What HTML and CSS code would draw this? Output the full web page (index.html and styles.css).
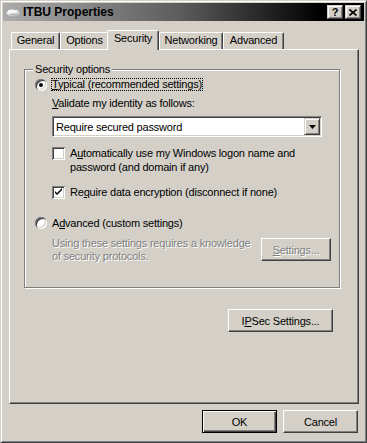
FILE: index.html
```html
<!DOCTYPE html>
<html>
<head>
<meta charset="utf-8">
<link rel="stylesheet" href="styles.css">
</head>
<body>
<div class="window">
  <div class="titlebar">
    <svg class="ticon" width="16" height="16" viewBox="0 0 16 16">
      <ellipse cx="8" cy="9" rx="6.5" ry="3.2" fill="#d8d8d8"/>
      <ellipse cx="7" cy="8" rx="4.5" ry="2.4" fill="#f4f4f4"/>
      <path d="M2 10 L5 7 L9 9 L13 6" stroke="#ffffff" stroke-width="1" fill="none"/>
      <ellipse cx="9" cy="10.5" rx="4" ry="1.2" fill="#b8b8b8"/>
    </svg>
    <span class="title">ITBU Properties</span>
    <div class="tbtns">
      <span class="tbtn help">?</span>
      <span class="tbtn close"><svg width="8" height="7" viewBox="0 0 8 7"><path d="M0.5 0.5 L7.5 6.5 M7.5 0.5 L0.5 6.5" stroke="#000" stroke-width="1.6"/></svg></span>
    </div>
  </div>
  <div class="body">
    <div class="tabs">
      <div class="tab t-general">General</div>
      <div class="tab t-options">Options</div>
      <div class="tab t-security sel">Security</div>
      <div class="tab t-networking">Networking</div>
      <div class="tab t-advanced">Advanced</div>
    </div>
    <div class="panel">
      <fieldset class="group">
        <legend>Security options</legend>
        <div class="opt-row r-typical">
          <span class="radio checked"></span>
          <span class="opt-label focus"><u>T</u>ypical (recommended settings)</span>
        </div>
        <div class="validate"><u>V</u>alidate my identity as follows:</div>
        <div class="combo">
          <span class="combo-text">Require secured password</span>
          <span class="combo-btn"><svg width="7" height="4" viewBox="0 0 7 4"><path d="M0 0 H7 L3.5 4 Z" fill="#000"/></svg></span>
        </div>
        <div class="check-row c1">
          <span class="check"></span>
          <span class="check-label">A<u>u</u>tomatically use my Windows logon name and<br>password (and domain if any)</span>
        </div>
        <div class="check-row c2">
          <span class="check"><svg width="9" height="9" viewBox="0 0 9 9"><path d="M1 3 L1 5 L3 7 L8 2 L8 0 L3 5 Z" fill="#000"/></svg></span>
          <span class="check-label">Re<u>q</u>uire data encryption (disconnect if none)</span>
        </div>
        <div class="opt-row r-adv">
          <span class="radio"></span>
          <span class="opt-label">A<u>d</u>vanced (custom settings)</span>
        </div>
        <div class="adv-info">
          <span class="disabled-text">Using these settings requires a knowledge<br>of security protocols.</span>
          <button class="btn settings disabled"><u>S</u>ettings...</button>
        </div>
      </fieldset>
      <div class="ipsec-row"><button class="btn ipsec">I<u>P</u>Sec Settings...</button></div>
    </div>
    <div class="footer">
      <button class="btn default">OK</button>
      <button class="btn">Cancel</button>
    </div>
  </div>
</div>
</body>
</html>
```
FILE: styles.css
```css
* { box-sizing: border-box; }
html, body { margin: 0; padding: 0; }
body {
  background: #d4d0c8;
  font-family: "Liberation Sans", Arial, sans-serif;
  font-size: 11px;
  letter-spacing: -0.2px;
  color: #000;
}
u { text-decoration: underline; text-underline-offset: 1px; }

.window {
  width: 367px;
  height: 443px;
  border: 1px solid;
  border-color: #d4d0c8 #404040 #404040 #d4d0c8;
  box-shadow: inset 1px 1px #fff, inset -1px -1px #808080;
  padding: 2px;
  background: #d4d0c8;
}

.titlebar {
  height: 18px;
  display: flex;
  align-items: center;
  background: linear-gradient(to right, #acacac 0%, #5a5a5a 50%, #000 88%);
  padding: 0 3px 0 2px;
}
.ticon { flex: none; }
.title { font-weight: bold; font-size: 12px; letter-spacing: 0; margin-left: 2px; flex: 1; }
.tbtns { display: flex; gap: 2px; }
.tbtn {
  width: 16px;
  height: 14px;
  background: #d4d0c8;
  border: 1px solid;
  border-color: #d4d0c8 #404040 #404040 #d4d0c8;
  box-shadow: inset 1px 1px #fff, inset -1px -1px #808080;
  display: flex;
  align-items: center;
  justify-content: center;
  font-weight: bold;
  font-size: 11px;
  letter-spacing: 0;
  line-height: 12px;
}

.body { padding: 9px 3px 0 6px; }

.tabs {
  display: flex;
  align-items: flex-end;
  height: 19px;
  padding-left: 2px;
}
.tab {
  height: 17px;
  border-top: 1px solid #fff;
  border-left: 1px solid #fff;
  border-right: 1px solid #404040;
  box-shadow: inset -1px 0 #808080;
  border-radius: 2px 2px 0 0;
  text-align: center;
  line-height: 14px;
  padding-bottom: 2px;
  background: #d4d0c8;
}
.t-general { width: 49px; }
.t-options { width: 49px; }
.t-security { width: 52px; }
.t-networking { width: 64px; }
.t-advanced { width: 61px; }
.tab.sel {
  height: 20px;
  margin-left: -2px;
  margin-bottom: -1px;
  padding-bottom: 5px;
  position: relative;
  z-index: 1;
}

.panel {
  width: 350px;
  height: 355px;
  border: 1px solid;
  border-color: #fff #404040 #404040 #fff;
  box-shadow: inset -1px -1px #808080;
  padding: 0 0 0 14px;
}

.group {
  margin: 13px 0 0 0;
  padding: 0 0 24px 0;
  width: 316px;
  min-width: 0;
  border: 1px solid #808080;
  box-shadow: 1px 1px 0 #fff, inset 1px 1px 0 #fff;
}
.group legend {
  margin-left: 8px;
  padding: 0 2px;
  line-height: 13px;
  background: #d4d0c8;
}

.opt-row {
  display: flex;
  align-items: center;
  height: 13px;
  margin-left: 10px;
}
.r-typical { margin-top: 2px; }
.r-adv { margin-top: 17px; height: 14px; }
.opt-label { margin-left: 4px; padding: 0 1px; line-height: 13px; }
.focus { outline: 1px dotted #000; outline-offset: -1px; }

.radio {
  flex: none;
  width: 12px;
  height: 12px;
  border-radius: 50%;
  background: #fff;
  box-shadow: inset 1px 1px #808080, inset -1px -1px #fff, inset 2px 2px #404040, inset -2px -2px #d4d0c8;
  display: flex;
  align-items: center;
  justify-content: center;
}
.radio.checked::after {
  content: "";
  width: 4px;
  height: 4px;
  border-radius: 50%;
  background: #000;
}

.validate { margin: 6px 0 0 27px; line-height: 13px; }

.combo {
  margin: 6px 0 0 27px;
  width: 270px;
  height: 21px;
  border: 1px solid;
  border-color: #808080 #fff #fff #808080;
  box-shadow: inset 1px 1px #404040, inset -1px -1px #d4d0c8;
  background: #fff;
  display: flex;
  align-items: center;
  padding: 1px 1px 1px 2px;
}
.combo-text { flex: 1; padding-left: 1px; }
.combo-btn {
  width: 16px;
  height: 17px;
  background: #d4d0c8;
  border: 1px solid;
  border-color: #d4d0c8 #404040 #404040 #d4d0c8;
  box-shadow: inset 1px 1px #fff, inset -1px -1px #808080;
  display: flex;
  align-items: center;
  justify-content: center;
}

.check-row {
  display: flex;
  align-items: flex-start;
  margin-left: 27px;
  line-height: 14px;
}
.c1 { margin-top: 9px; }
.c2 { margin-top: 11px; }
.check {
  flex: none;
  width: 13px;
  height: 13px;
  margin-top: 1px;
  background: #fff;
  box-shadow: inset 1px 1px #808080, inset -1px -1px #fff, inset 2px 2px #404040, inset -2px -2px #d4d0c8;
  display: flex;
  align-items: center;
  justify-content: center;
}
.check-label { margin-left: 5px; }

.adv-info {
  display: flex;
  align-items: flex-start;
  margin: 7px 8px 0 27px;
}
.disabled-text {
  flex: 1;
  line-height: 13px;
  color: #808080;
  text-shadow: 1px 1px 0 #fff;
}

.btn {
  font: inherit;
  letter-spacing: inherit;
  color: #000;
  background: #d4d0c8;
  border: 1px solid;
  border-color: #fff #404040 #404040 #fff;
  box-shadow: inset -1px -1px #808080;
  height: 23px;
  padding: 0;
  text-align: center;
}
.btn.disabled { color: #808080; text-shadow: 1px 1px 0 #fff; }
.settings { width: 70px; margin-top: 1px; flex: none; }

.ipsec-row {
  display: flex;
  justify-content: flex-end;
  margin-top: 21px;
  padding-right: 25px;
}
.ipsec { width: 105px; }

.footer {
  display: flex;
  justify-content: flex-end;
  gap: 6px;
  margin-top: 6px;
  padding-right: 3px;
}
.footer .btn { width: 75px; }
.btn.default {
  border: 1px solid #000;
  box-shadow: inset 1px 1px #fff, inset -1px -1px #404040, inset -2px -2px #808080;
}
```
